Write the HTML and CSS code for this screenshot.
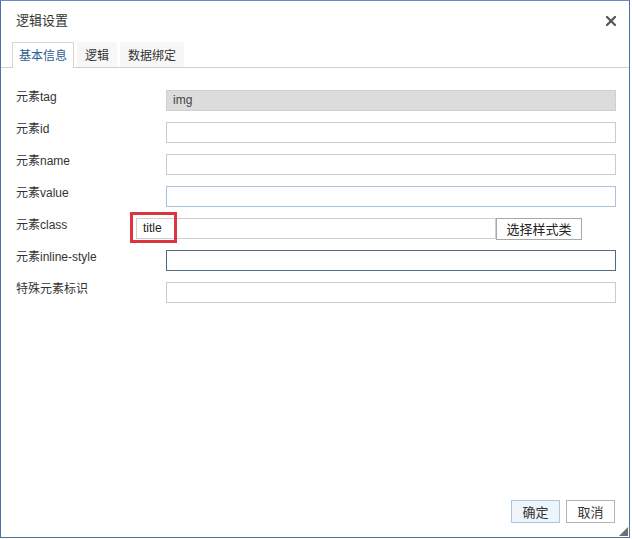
FILE: index.html
```html
<!DOCTYPE html>
<html lang="zh">
<head>
<meta charset="utf-8">
<title>逻辑设置</title>
<link rel="stylesheet" href="styles.css">
</head>
<body>
<div class="dialog">
  <div class="header">
    <span class="title">逻辑设置</span>
    <span class="close" aria-label="关闭">
      <svg width="10" height="10" viewBox="0 0 10 10"><path d="M1 1L9 9M9 1L1 9" stroke="#555" stroke-width="2.2" stroke-linecap="square"/></svg>
    </span>
  </div>
  <div class="tabs">
    <div class="tab active">基本信息</div>
    <div class="tab">逻辑</div>
    <div class="tab">数据绑定</div>
  </div>
  <div class="form">
    <div class="row">
      <div class="label">元素tag</div>
      <div class="input readonly">img</div>
    </div>
    <div class="row">
      <div class="label">元素id</div>
      <div class="input"></div>
    </div>
    <div class="row">
      <div class="label">元素name</div>
      <div class="input"></div>
    </div>
    <div class="row">
      <div class="label">元素value</div>
      <div class="input hover"></div>
    </div>
    <div class="row">
      <div class="label short">元素class</div>
      <div class="class-field">
        <div class="input class-input">title</div>
        <div class="pick-btn">选择样式类</div>
        <div class="highlight"></div>
      </div>
    </div>
    <div class="row">
      <div class="label">元素inline-style</div>
      <div class="input focus"></div>
    </div>
    <div class="row">
      <div class="label">特殊元素标识</div>
      <div class="input"></div>
    </div>
  </div>
  <div class="footer">
    <div class="btn primary">确定</div>
    <div class="btn">取消</div>
  </div>
  <div class="grip"></div>
</div>
</body>
</html>
```

FILE: styles.css
```css
html, body {
  margin: 0;
  padding: 0;
  background: #ffffff;
}
body {
  font-family: "Liberation Sans", "Noto Sans CJK SC", sans-serif;
  font-size: 12px;
  color: #333;
}
.dialog {
  position: relative;
  box-sizing: border-box;
  width: 630px;
  height: 538px;
  border: 1px solid #4c71aa;
  border-top-color: #6b8cc0;
  background: #fff;
  display: flex;
  flex-direction: column;
}
.header {
  height: 40px;
  display: flex;
  align-items: center;
  justify-content: space-between;
  padding: 0 13px 0 15px;
}
.title {
  font-family: "Noto Sans CJK SC", sans-serif;
  font-size: 13px;
  color: #333;
  margin-top: -4px;
}
.close {
  display: flex;
  margin-top: -1px;
}
.tabs {
  display: flex;
  gap: 3px;
  margin-top: 1px;
  padding-left: 11px;
  border-bottom: 1px solid #cfcfcf;
  height: 25px;
}
.tab {
  font-family: "Noto Sans CJK SC", sans-serif;
  font-size: 12px;
  color: #333;
  background: #f7f7f7;
  padding: 0 8px;
  line-height: 25px;
  box-sizing: border-box;
  height: 25px;
}
.tab.active {
  background: #fff;
  color: #2c5d95;
  border: 1px solid #d6d6d6;
  border-bottom: none;
  height: 26px;
  line-height: 24px;
  padding: 0 6px;
}
.form {
  display: flex;
  flex-direction: column;
  padding: 22px 0 0 15px;
}
.row {
  display: flex;
  align-items: flex-start;
  height: 32px;
}
.label {
  width: 150px;
  flex: none;
  font-size: 12px;
  color: #333;
  line-height: 14px;
  padding-top: 0;
  font-family: "Liberation Sans", "Noto Sans CJK SC", sans-serif;
}
.label.short {
  width: 120px;
}
.input {
  flex: none;
  box-sizing: border-box;
  width: 450px;
  height: 21px;
  border: 1px solid #c9cdd2;
  background: #fff;
  font-size: 12px;
  line-height: 19px;
  padding-left: 6px;
  color: #333;
}
.input.readonly {
  background: #dcdcdc;
  border-color: #cfcfcf;
  color: #444;
}
.input.hover {
  border-color: #a9c3dc;
}
.input.focus {
  border-color: #4f6b86;
}
.class-field {
  position: relative;
  display: flex;
}
.input.class-input {
  width: 360px;
  border-color: #cfcfcf;
  padding-left: 6px;
  color: #222;
}
.pick-btn {
  flex: none;
  box-sizing: border-box;
  width: 86px;
  height: 22px;
  border: 1px solid #a8a8a8;
  background: #fff;
  font-family: "Noto Sans CJK SC", sans-serif;
  font-size: 13px;
  line-height: 20px;
  text-align: center;
  color: #222;
}
.highlight {
  position: absolute;
  left: -6px;
  top: -6px;
  width: 47px;
  height: 31px;
  box-sizing: border-box;
  border: 3px solid #d9363e;
}
.footer {
  margin-top: auto;
  display: flex;
  justify-content: flex-end;
  gap: 6px;
  padding: 0 14px 14px 0;
}
.btn {
  box-sizing: border-box;
  width: 49px;
  height: 23px;
  border: 1px solid #b3b3b3;
  background: #fff;
  font-family: "Noto Sans CJK SC", sans-serif;
  font-size: 13px;
  line-height: 21px;
  text-align: center;
  color: #333;
}
.btn.primary {
  background: #edf4fa;
  border-color: #a9c8df;
}
.grip {
  position: absolute;
  right: 1px;
  bottom: 1px;
  width: 0;
  height: 0;
  border-left: 9px solid transparent;
  border-bottom: 9px solid #6f6f6f;
}
```
